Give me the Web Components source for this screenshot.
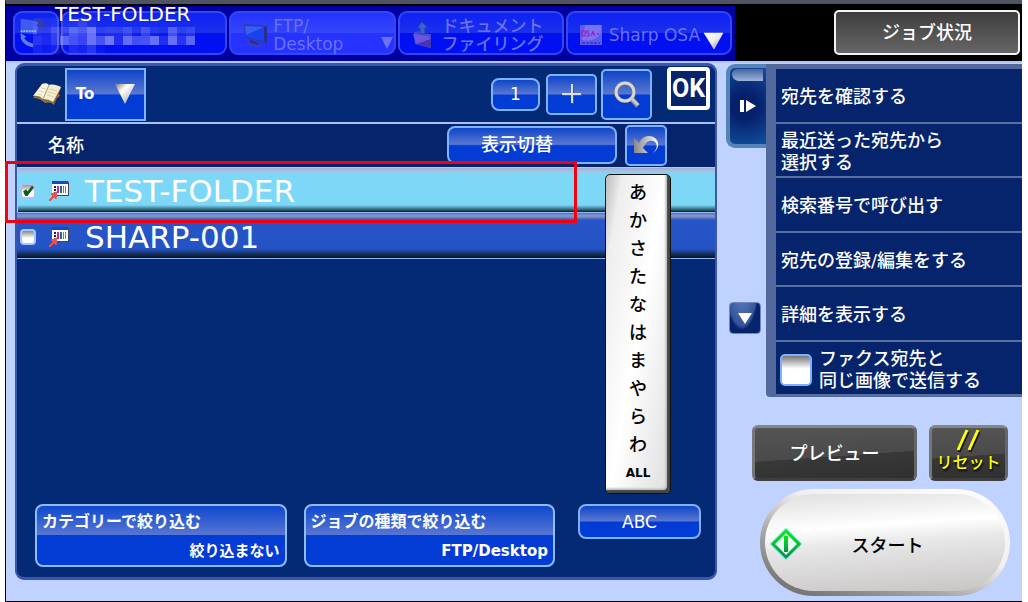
<!DOCTYPE html>
<html lang="ja">
<head>
<meta charset="utf-8">
<meta name="viewport" content="width=device-width, initial-scale=1">
<title>宛先</title>
<style>
  body {
    margin: 0;
    background: #fff;
    color: #fff;
    font: 500 18px/22px "DejaVu Sans", "Noto Sans CJK JP", sans-serif;
  }
</style>
</head>
<body>
<copier-screen>
  <mode-tab slot="tabs" kind="small" label="宛先">
    <svg slot="icon" width="38" height="38" viewBox="0 0 38 38" aria-hidden="true">
      <path d="M3 3l20 3-2 14-18-1z" fill="#3d5cf0"/>
      <path d="M3 17h17" stroke="#9fb4ff" stroke-width="2" stroke-dasharray="2 1"/>
      <path d="M17 6c5-5 10-4 12 3l3-1-5 8-7-6 4-1c-2-3-4-4-7-3z" fill="#2433a8"/>
      <path d="M3 19l6 4-2 2c2 3 5 5 10 6v4C9 34 5 30 3 25z" fill="#5f78e0"/>
    </svg>
  </mode-tab>
  <mode-tab slot="tabs" label="送信元"></mode-tab>
  <mode-tab slot="tabs" kind="light" arrow>
    <svg slot="icon" width="25" height="28" viewBox="1 0 25 28" aria-hidden="true">
      <path d="M2 3l22 2v18L3 17z" fill="#3438a8"/>
      <path d="M3 5l19 1v14L4 16z" fill="#1742ee"/>
      <path d="M3 5l19 1-18 8z" fill="#3560f4"/>
      <path d="M22 6l3-1v18l-3-3zM8 19l8 3v4l-8-3z" fill="#2b2d93"/>
      <path d="M5 21l15 4-2 2-13-4z" fill="#3c3fb4"/>
    </svg>
    FTP/<br>Desktop
  </mode-tab>
  <mode-tab slot="tabs">
    <svg slot="icon" width="25" height="30" viewBox="0 0 25 30" aria-hidden="true">
      <path d="M2 12l5-1 2 2 10 1v14L3 24z" fill="#4a46d8"/>
      <path d="M1 14l16 2 2 12-15-4z" fill="#6a55e0"/>
      <path d="M4 24l15 4v-9z" fill="#4534b4"/>
      <path d="M10 2l6 6h-3v6H8V8H5z" fill="#3c62c8" stroke="#203cc8"/>
    </svg>
    ドキュメント<br>ファイリング
  </mode-tab>
  <mode-tab slot="tabs">
    <svg slot="icon" width="24" height="22" viewBox="0 0 24 22" aria-hidden="true">
      <path d="M0 1h22v20H0z" fill="#5d59ef"/>
      <path d="M5 1h16v8c-6 8-12 8-19 7z" fill="#7773f4"/>
      <path d="M2 7h3v5H2zm7 0H6v2h3v3H6m5 0l2-5 2 5m-3-2h2" fill="none" stroke="#a01ab0" stroke-width="1"/>
      <circle cx="18" cy="10" r="1" fill="#a01ab0"/>
      <path d="M2 19h18" stroke="#2522a0" stroke-width="1" stroke-dasharray="3 1"/>
    </svg>
    Sharp OSA
  </mode-tab>

  <address-panel slot="panel">
    <address-row slot="rows" name="TEST-FOLDER" checked></address-row>
    <address-row slot="rows" name="SHARP-001"></address-row>
    <filter-button slot="filters" value="絞り込まない">カテゴリーで絞り込む</filter-button>
    <filter-button slot="filters" value="FTP/Desktop">ジョブの種類で絞り込む</filter-button>
  </address-panel>

  <action-menu slot="side">
    <menu-item>宛先を確認する</menu-item>
    <menu-item>最近送った宛先から<br>選択する</menu-item>
    <menu-item>検索番号で呼び出す</menu-item>
    <menu-item>宛先の登録/編集をする</menu-item>
    <menu-item>詳細を表示する</menu-item>
    <menu-item checkable>ファクス宛先と<br>同じ画像で送信する</menu-item>
  </action-menu>
  <job-controls slot="side"></job-controls>
</copier-screen>

<script>
const define = (name, html, setup) => {
  const template = document.createElement('template');
  template.innerHTML = html;

  customElements.define(name, class extends HTMLElement {
    constructor() {
      super();
      const shadow = this.attachShadow({ mode: 'open' });
      shadow.appendChild(template.content.cloneNode(true));
    }

    connectedCallback() {
      if (setup) setup(this, this.shadowRoot);
    }
  });
};

define('copier-screen', `
  <style>
  :host {
    box-sizing: border-box;
    display: flex;
    flex-direction: column;
    min-height: 100vh;
    margin: 0 6px 0 5px;
    border: solid #000;
    border-width: 0 0 1px 1px;
    border-top: 4px solid #505462;
    background: #c0d2ff;
  }

  header {
    display: flex;
    height: 55px;
    padding-top: 2px;
    background: #000;
  }

  nav {
    position: relative;
    box-sizing: border-box;
    flex: 1;
    display: flex;
    gap: 2px;
    padding: 5px 3px 6px 7px;
    background: #0000a0;
  }

  .current {
    position: absolute;
    left: 49px;
    top: -4px;
    font-size: 20px;
    line-height: 24px;
    text-shadow: 0 0 1px #223;
  }

  .mosaic {
    position: absolute;
    left: 27px;
    top: 12px;
  }

  .next {
    position: absolute;
    right: 10px;
    top: 26px;
  }

  .status {
    flex: 0 0 287px;
    display: flex;
    justify-content: flex-end;
    padding: 4px 2px 6px 0;
    box-sizing: border-box;
  }

  .status button {
    width: 186px;
    border: 2px solid #f4f4f4;
    border-radius: 5px;
    background: linear-gradient(#3e3e3e, #666);
    color: #fff;
    font: inherit;
  }

  main {
    flex: 1;
    display: flex;
    gap: 9px;
    padding: 0 0 21px 9px;
    border-top: 2px solid #b4c8f8;
  }

  .side {
    flex: 0 0 296px;
    margin-bottom: -21px;
  }

  ::slotted([slot="panel"]) {
    flex: 1;
  }
  </style>

  <header>
    <nav>
      <slot name="tabs"></slot>
      <svg class="mosaic" width="162" height="36" aria-hidden="true"></svg>
      <span class="current">TEST-FOLDER</span>
      <svg class="next" width="22" height="18" viewBox="0 0 22 18" aria-hidden="true">
        <linearGradient id="g" x2="1" y2="1"><stop stop-color="#fff"/><stop offset=".5" stop-color="#eee"/><stop offset="1" stop-color="#777"/></linearGradient>
        <path d="M1 1h19L11 17z" fill="url(#g)" stroke="#fff" stroke-width=".5"/>
      </svg>
    </nav>
    <div class="status"><button type="button">ジョブ状況</button></div>
  </header>
  <main>
    <slot name="panel"></slot>
    <div class="side"><slot name="side"></slot></div>
  </main>
`, (host, root) => {
  // opacity of each block, one row per line
  const blocks = [
    [8, 6, 8, 4, 6, 16, 4, 0, 0, 0, 0, 0, 0, 0, 0, 0, 0, 0],
    [14, 12, 26, 20, 40, 30, 52, 12, 16, 14, 24, 8, 26, 8, 4, 34, 12, 18],
    [20, 14, 26, 46, 36, 28, 54, 36, 56, 16, 50, 34, 36, 52, 16, 52, 20, 46],
    [10, 6, 10, 4, 14, 10, 20, 4, 0, 0, 0, 0, 0, 0, 0, 0, 0, 0],
  ];
  const svg = root.querySelector('.mosaic');
  svg.replaceChildren();
  blocks.forEach((row, y) => {
    row.forEach((value, x) => {
      const rect = document.createElementNS('http://www.w3.org/2000/svg', 'rect');
      rect.setAttribute('x', x * 9);
      rect.setAttribute('y', y * 9);
      rect.setAttribute('width', 9);
      rect.setAttribute('height', 9);
      rect.setAttribute('fill', '#c4c8ff');
      rect.setAttribute('opacity', value / 100);
      svg.appendChild(rect);
    });
  });
});

define('mode-tab', `
  <style>
  :host {
    flex: 1;
    display: block;
    min-width: 0;
  }

  :host([kind="small"]) {
    flex: 0 0 46px;
  }

  button {
    display: flex;
    align-items: center;
    gap: 5px;
    width: 100%;
    height: 44px;
    padding: 3px 0 0 12px;
    border: 2px solid #3048f8;
    border-radius: 9px;
    background: linear-gradient(#0d22f4, #1c30ec 50%, #0010ee 50%, #0010f4);
    color: #6a70f8;
    font: inherit;
    font-size: 17px;
    line-height: 18px;
    text-align: left;
    white-space: nowrap;
  }

  :host([kind="small"]) button {
    padding: 0 0 0 3px;
  }

  :host([kind="light"]) button {
    background: linear-gradient(#2433ff, #3547f8 50%, #2633ff 50%, #2633ff);
  }

  .arrow {
    display: none;
    align-self: flex-end;
    margin: 0 1px 4px auto;
  }

  :host([arrow]) .arrow {
    display: block;
  }
  </style>

  <button type="button">
    <slot name="icon"></slot>
    <span><slot></slot></span>
    <svg class="arrow" width="12" height="12" viewBox="0 0 12 12" aria-hidden="true"><path d="M0 0h12L6 12z" fill="#6a73fa"/></svg>
  </button>
`, (host, root) => {
  if (host.hasAttribute('label')) {
    root.querySelector('button').setAttribute('aria-label', host.getAttribute('label'));
  }
});

define('gloss-button', `
  <style>
  :host {
    display: block;
    height: 33px;
  }

  button {
    display: flex;
    align-items: center;
    justify-content: center;
    width: 100%;
    height: 100%;
    padding: 0;
    border: 2px solid #7db2ff;
    border-radius: var(--radius, 8px);
    background: linear-gradient(#0e45c8, #5977d1 48%, #033bd5 52%, #033bd5);
    color: #fff;
    font: inherit;
  }
  </style>

  <button type="button"><slot></slot></button>
`, (host, root) => {
  if (host.hasAttribute('label')) {
    root.querySelector('button').setAttribute('aria-label', host.getAttribute('label'));
  }
});

define('filter-button', `
  <style>
  :host {
    flex: 1;
    display: block;
  }

  button {
    display: flex;
    flex-direction: column;
    width: 100%;
    height: 63px;
    padding: 0 5px;
    border: 2px solid #8fbcff;
    border-radius: 8px;
    background: linear-gradient(#0e48d0, #5977d1 50%, #033bd5 50%, #033bd5);
    color: #fff;
    font: bold 16px/29px "Noto Sans CJK JP", sans-serif;
    text-align: left;
    white-space: nowrap;
  }

  .value {
    align-self: flex-end;
    font: bold 15px/32px "DejaVu Sans", "Noto Sans CJK JP", sans-serif;
  }
  </style>

  <button type="button"><span><slot></slot></span><span class="value"></span></button>
`, (host, root) => {
  root.querySelector('.value').textContent = host.getAttribute('value');
});

define('address-panel', `
  <style>
  :host {
    position: relative;
    display: flex;
    flex-direction: column;
    border: solid #3c57a8;
    border-width: 3px 2px;
    border-radius: 9px;
    background: #042a75;
  }

  .tools {
    display: flex;
    align-items: center;
    height: 56px;
    padding: 0 5px 0 15px;
    border-bottom: 2px solid #a9c2f5;
  }

  .to {
    --radius: 0;
    width: 81px;
    height: 53px;
    margin: 0 auto 0 2px;
    font-size: 15px;
    font-weight: bold;
  }

  .to svg {
    margin-left: 21px;
  }

  .count {
    width: 49px;
    margin-right: 6px;
    font-size: 17px;
  }

  .add {
    --radius: 5px;
    width: 51px;
    height: 41px;
    margin-right: 4px;
  }

  .search {
    --radius: 5px;
    width: 51px;
    height: 51px;
    margin-right: 15px;
  }

  .ok {
    align-self: flex-start;
    width: 43px;
    height: 43px;
    margin-top: 1px;
    padding: 0;
    border: 4px solid #fff;
    border-radius: 4px;
    background: #06246b;
    color: #fff;
    font: bold 25px/34px Roboto, "Liberation Sans", sans-serif;
  }

  .head {
    display: flex;
    align-items: center;
    gap: 8px;
    height: 42px;
    padding: 0 48px 1px 31px;
    background: #06246b;
  }

  .head span {
    margin: 2px auto 0 0;
  }

  .switch {
    width: 170px;
    height: 38px;
  }

  .switch i {
    width: 30px;
  }

  .back {
    --radius: 5px;
    width: 42px;
    height: 41px;
  }

  .list {
    flex: 1;
    position: relative;
  }

  .mark {
    position: absolute;
    left: -12px;
    right: 138px;
    top: -6px;
    height: 56px;
    border: 3px solid #f40010;
    pointer-events: none;
  }

  kana-index {
    position: absolute;
    right: 44px;
    top: 7px;
  }

  footer {
    display: flex;
    align-items: flex-start;
    gap: 17px;
    padding: 0 14px 10px 18px;
  }

  .abc {
    flex: 0 0 123px;
    height: 35px;
    margin-left: 6px;
    font-size: 17px;
  }
  </style>

  <div class="tools">
    <svg width="31" height="24" viewBox="0 0 31 24" aria-hidden="true">
      <path d="M1 16L10 3c3-1 5-1 7 1 4-1 8 0 12 2l-7 17c-3-3-6-3-9-2-3-3-7-5-12-5z" fill="#8d6d3c"/>
      <path d="M1 14L10 2c3-1 5-1 7 1l-6 14c-3-3-6-4-10-3z" fill="#fbf7df"/>
      <path d="M11 17l6-14c4-1 8 0 12 2l-8 15c-3-2-6-3-10-3z" fill="#f3edcb"/>
      <path d="M9 6l5 1M7 9l5 1M5 12l5 1m7-6l8 2m-9 1l8 2m-9 1l7 2" stroke="#d9d1b0"/>
      <path d="M11 17l6-14" stroke="#a8a080"/>
      <path d="M26 12l2 1-2 3-1-1z" fill="#d1572e"/>
    </svg>
    <gloss-button class="to">To
      <svg width="20" height="22" viewBox="0 0 20 22" aria-hidden="true">
        <linearGradient id="a" x2="1" y2="1"><stop stop-color="#777"/><stop offset=".35" stop-color="#fff"/><stop offset="1" stop-color="#999"/></linearGradient>
        <path d="M0 1h20L10 21z" fill="url(#a)"/>
      </svg>
    </gloss-button>
    <gloss-button class="count">1</gloss-button>
    <gloss-button class="add" label="追加">
      <svg width="20" height="20" viewBox="0 0 20 20" aria-hidden="true"><path d="M11 1v19M1 11h19" stroke="#556" stroke-width="2"/><path d="M10 0v19M0 10h19" stroke="#ddd" stroke-width="2"/></svg>
    </gloss-button>
    <gloss-button class="search" label="検索">
      <svg width="28" height="28" viewBox="0 0 28 28" aria-hidden="true">
        <circle cx="12" cy="12" r="9" fill="none" stroke="#777" stroke-width="4"/>
        <path d="M18 18l7 8" stroke="#888" stroke-width="5"/>
        <circle cx="12" cy="12" r="9" fill="none" stroke="#d8d8d8" stroke-width="3"/>
        <path d="M18 18l7 7" stroke="#ccc" stroke-width="3"/>
      </svg>
    </gloss-button>
    <button class="ok" type="button">OK</button>
  </div>

  <div class="head">
    <span>名称</span>
    <gloss-button class="switch">表示切替<i></i></gloss-button>
    <gloss-button class="back" label="戻る">
      <svg width="26" height="20" viewBox="0 0 26 20" aria-hidden="true">
        <linearGradient id="b" x2="1"><stop stop-color="#888"/><stop offset=".6" stop-color="#c8c8c8"/><stop offset="1" stop-color="#fff"/></linearGradient>
        <path d="M1 3v15h14l-5-5c3-7 8-9 12-6 3 3 2 7-2 11 6-4 7-11 2-15C17-1 9 1 6 8z" fill="url(#b)"/>
      </svg>
    </gloss-button>
  </div>

  <div class="list">
    <slot name="rows"></slot>
    <div class="mark"></div>
    <kana-index></kana-index>
  </div>

  <footer>
    <slot name="filters"></slot>
    <gloss-button class="abc">ABC</gloss-button>
  </footer>
`);

define('address-row', `
  <style>
  :host {
    display: block;
    border-bottom: 1px solid #8cb8ff;
  }

  label {
    box-sizing: border-box;
    display: flex;
    align-items: center;
    gap: 12px;
    height: 45px;
    padding: 2px 0 0 3px;
    background: linear-gradient(#5a70b0, #8d9bc8 3px, #2555c6 7px, #2353c4 36px, #123 43px, #001030);
    font-size: 31px;
    line-height: 36px;
  }

  :host([checked]) label {
    border: solid #d8dc20;
    border-width: 1px 0 0 1px;
    padding-left: 2px;
    background: linear-gradient(#a0b0d8, #a8c0e0 3px, #7dd8f8 6px, #7dd8f8 37px, #2c5a6a 42px, #081a28);
  }

  input {
    box-sizing: border-box;
    appearance: none;
    flex: none;
    width: 16px;
    height: 16px;
    margin: 0;
    border: 2px solid #a9c4f8;
    border-radius: 4px;
    background: linear-gradient(#888, #fff 60%);
  }

  input:checked {
    background:
      url("data:image/svg+xml,%3Csvg xmlns='http://www.w3.org/2000/svg' viewBox='0 0 11 11'%3E%3Cpath d='M1 6l3-2 1 2 4-5 2 1-6 8H3z' fill='%230a5a18'/%3E%3C/svg%3E"),
      linear-gradient(#999, #fff 60%);
  }

  svg {
    flex: none;
  }

  span {
    margin-left: 3px;
  }
  </style>

  <label>
    <input type="checkbox">
    <svg width="22" height="22" viewBox="0 0 22 22" aria-hidden="true">
      <path d="M5 2h16v14H5z" fill="#445"/>
      <path d="M4 1h16v14H4z" fill="#fff"/>
      <path d="M4 1h16v3H4z" fill="#1548d0"/>
      <path d="M6 6h2v2H6zm0 3h2v2H6zm0 3h2v2H6z" fill="#223"/>
      <path d="M9 6h2v7H9z" fill="#c028a0"/>
      <path d="M12 6h2v5h-2z" fill="#26a"/>
      <path d="M12 11h2v2h-2z" fill="#282"/>
      <path d="M15 6h1v7h-1zm2 0h1v7h-1z" fill="#883"/>
      <path d="M9 12l-1 7-2-2-4 4-1-1 4-4-2-2z" fill="#f05050" stroke="#d55"/>
    </svg>
    <span></span>
  </label>
`, (host, root) => {
  root.querySelector('input').checked = host.hasAttribute('checked');
  root.querySelector('span').textContent = host.getAttribute('name');
});

define('kana-index', `
  <style>
  :host {
    display: flex;
    flex-direction: column;
    box-sizing: border-box;
    width: 66px;
    padding: 4px 0 6px;
    border: 1px solid #111;
    border-radius: 5px;
    background: linear-gradient(100deg, #bbb, #eee 14%, #fff 50%, #ddd);
    box-shadow: inset -3px -3px 1px #444, inset -5px -5px 2px #ccc;
  }

  button {
    height: 28px;
    padding: 0;
    border: 0;
    background: none;
    color: #000;
    font: inherit;
  }

  button:last-child {
    font-size: 12px;
    font-weight: bold;
  }
  </style>
`, (host, root) => {
  [...'あかさたなはまやらわ', 'ALL'].forEach((text) => {
    const button = document.createElement('button');
    button.type = 'button';
    button.textContent = text;
    root.appendChild(button);
  });
});

define('action-menu', `
  <style>
  :host {
    display: flex;
    margin-top: 1px;
  }

  .rail {
    flex: 0 0 40px;
  }

  button {
    display: flex;
    align-items: center;
    justify-content: center;
    padding: 0;
  }

  .fold {
    position: relative;
    width: 40px;
    height: 84px;
    border: solid #5484b8;
    border-width: 4px 0 4px 4px;
    border-radius: 9px 0 0 9px;
    background: radial-gradient(circle at 40% 50%, #06206c 30%, #10509c);
  }

  .fold::before {
    content: '';
    position: absolute;
    left: 2px;
    right: 3px;
    top: 1px;
    height: 12px;
    border-radius: 6px 0 0 8px;
    background: linear-gradient(#4564a4, #9fb4dc);
  }

  .down {
    width: 32px;
    height: 32px;
    margin: 154px 0 0 3px;
    border: 1px solid #6a87c4;
    border-radius: 4px;
    background: radial-gradient(ellipse at 40% -60%, #6a88c8, #34549a 60%, #06246b 66%);
  }

  .items {
    flex: 1;
    display: grid;
    grid-auto-rows: 1fr;
    min-height: 327px;
    border: solid #53689c;
    border-width: 5px 0 1px 10px;
    border-radius: 0 0 0 4px;
    background: #06246b;
  }
  </style>

  <div class="rail">
    <button class="fold" type="button" aria-label="たたむ">
      <svg width="16" height="14" viewBox="0 0 16 14" aria-hidden="true"><path d="M0 1h4v12H0zM6 1l10 6-10 6z" fill="#fff"/></svg>
    </button>
    <button class="down" type="button" aria-label="下へ">
      <svg width="14" height="12" viewBox="0 0 14 12" aria-hidden="true"><path d="M0 1h14L7 12z" fill="#fff"/></svg>
    </button>
  </div>
  <div class="items"><slot></slot></div>
`);

define('menu-item', `
  <style>
  :host {
    display: flex;
    border-bottom: 2px solid #58709f;
  }

  button,
  label {
    flex: 1;
    display: flex;
    align-items: center;
    gap: 7px;
    padding: 4px 0 0 5px;
    border: 0;
    background: none;
    color: #fff;
    font: inherit;
    text-align: left;
    white-space: nowrap;
  }

  label {
    padding-left: 4px;
  }

  input {
    appearance: none;
    flex: none;
    width: 32px;
    height: 32px;
    margin: 0;
    border: 2px solid #7db0ff;
    border-radius: 5px;
    background: linear-gradient(#777, #fff 45%);
  }
  </style>

  <button type="button"><span><slot></slot></span></button>
`, (host, root) => {
  if (host.hasAttribute('checkable')) {
    const label = document.createElement('label');
    label.innerHTML = '<input type="checkbox"><span><slot></slot></span>';
    root.querySelector('button').replaceWith(label);
  }
});

define('job-controls', `
  <style>
  :host {
    display: block;
    padding: 28px 12px 0 26px;
  }

  .row {
    display: flex;
    gap: 12px;
    padding-right: 2px;
  }

  button {
    padding: 0;
    color: #fff;
    font: inherit;
  }

  .dark {
    height: 56px;
    border: 3px solid #6b6b6b;
    border-color: #858585 #666 #3e3e3e #777;
    border-radius: 6px;
    background: linear-gradient(176deg, #555, #4a4a4a 55%, #383838 56%, #303030);
  }

  .preview {
    flex: 1;
    padding-top: 2px;
  }

  .reset {
    flex: 0 0 79px;
    display: flex;
    flex-direction: column;
    align-items: center;
    color: #ff0;
    font-size: 16px;
    line-height: 22px;
    text-shadow: 1px 2px 2px #000;
  }

  .start {
    display: grid;
    grid-template-columns: 32px 1fr 32px;
    align-items: center;
    width: 250px;
    height: 107px;
    margin: 8px 0 0 8px;
    padding: 2px 0 0 5px;
    border: 5px solid transparent;
    border-radius: 54px;
    background:
      linear-gradient(176deg, #e0dede, #fff 34%, #e8e8e8 50%, #c8c4c4) padding-box,
      linear-gradient(20deg, #777 10%, #aaa 35%, #f0f0f0 60%, #fff) border-box;
    color: #000;
  }

  .start span {
    padding-top: 4px;
  }
  </style>

  <div class="row">
    <button class="dark preview" type="button">プレビュー</button>
    <button class="dark reset" type="button">
      <svg width="28" height="24" viewBox="0 0 28 24" aria-hidden="true"><path d="M4 24L13 4M15 24l9-20" stroke="#111" stroke-width="3"/><path d="M3 22L12 2M14 22l9-20" stroke="#ff0" stroke-width="3"/></svg>
      リセット
    </button>
  </div>
  <button class="start" type="button">
    <svg width="32" height="32" viewBox="0 0 32 32" aria-hidden="true">
      <linearGradient id="s" x2="0" y2="1"><stop stop-color="#0e1"/><stop offset="1" stop-color="#0a9050"/></linearGradient>
      <path d="M16 2l14 14-14 14L2 16z" fill="none" stroke="#9fe8f0" stroke-width="4"/>
      <path d="M16 3l13 13-13 13L3 16z" fill="#e8fff4" stroke="url(#s)" stroke-width="3"/>
      <path d="M14 8h4v16h-4z" fill="url(#s)"/>
    </svg>
    <span>スタート</span>
  </button>
`);
</script>
</body>
</html>
